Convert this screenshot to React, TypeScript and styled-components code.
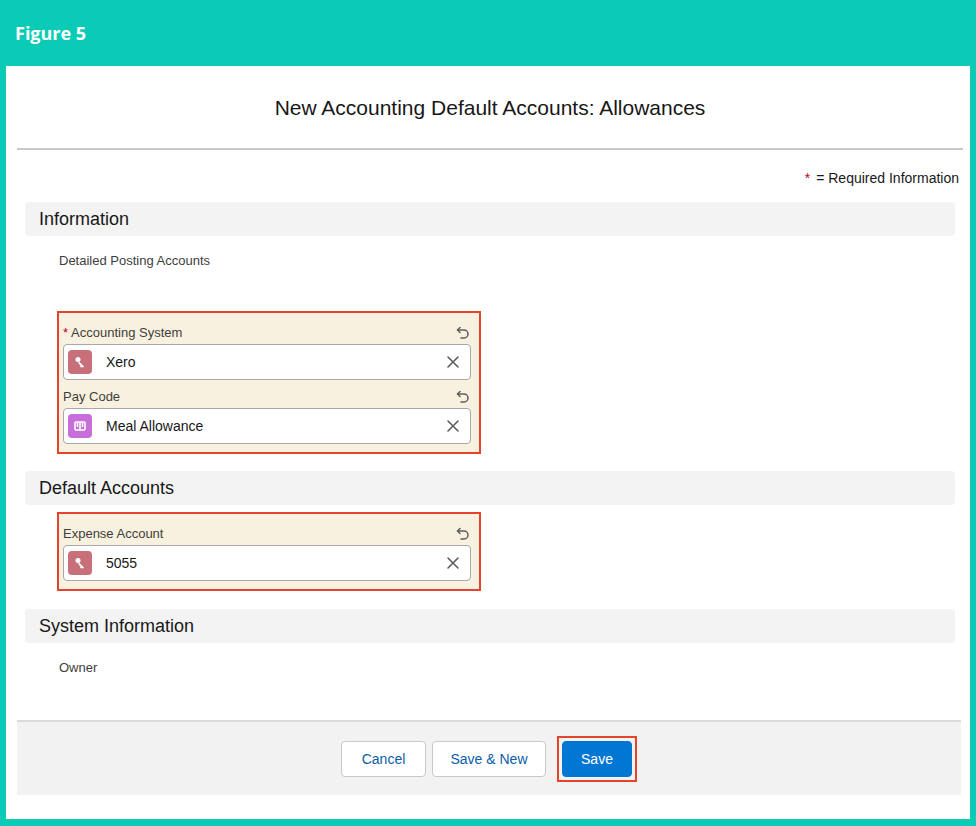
import React from "react";
import styled, { createGlobalStyle } from "styled-components";

const Global = createGlobalStyle`
  html, body { margin: 0; padding: 0; background: #fff; }
  body { font-family: "Helvetica Neue", Arial, "Liberation Sans", sans-serif; color: #181818; }
`;

const Frame = styled.div`
  width: 976px; height: 826px; box-sizing: border-box;
  border: 6px solid #0ccbb6; border-top: none; border-bottom-width: 7px;
  display: flex; flex-direction: column;
`;
const Banner = styled.div`
  height: 66px; background: #0ccbb6; margin: 0 -6px; padding: 0 15px;
  display: flex; align-items: center; color: #fff; font-weight: 700; font-size: 18px;
  font-family: "Open Sans", "Liberation Sans", sans-serif;
`;
const Body = styled.div`
  flex: 1; padding: 0 7px 0 11px; display: flex; flex-direction: column;
`;
const Title = styled.div`
  height: 80px; display: flex; align-items: center; justify-content: center;
  font-size: 21px; border-bottom: 2px solid #c9c9c9; padding-top: 2px;
`;
const Req = styled.div`
  text-align: right; font-size: 14px; padding: 20px 4px 0 0; height: 31px; box-sizing: border-box;
  span { color: #ba0517; margin-right: 6px; }
`;
const Section = styled.div`
  margin: 21px 8px 0 8px; height: 34px; background: #f3f3f3; border-radius: 4px;
  display: flex; align-items: center; padding-left: 14px; font-size: 18px;
`;
const Note = styled.div`
  font-size: 13px; color: #3e3e3c; padding: 17px 0 0 42px; height: 34px;
`;
const RedBox = styled.div<{ $mt: number }>`
  margin: ${p => p.$mt}px 0 0 40px; width: 424px; box-sizing: border-box;
  border: 2px solid #e5432b; background: #f9f1df; padding: 4px 8px 8px 4px;
`;
const LabelRow = styled.div`
  height: 23px; display: flex; align-items: center; justify-content: space-between;
  font-size: 13px; color: #3e3e3c; padding-top: 4px;
  b { color: #ba0517; font-weight: 400; margin-right: 3px; }
`;
const Input = styled.div<{ $mb?: number }>`
  height: 36px; box-sizing: border-box; border: 1px solid #a8a8a8; border-radius: 4px;
  background: #fff; display: flex; align-items: center; padding: 0 10px 0 4px;
  font-size: 14px; margin-bottom: ${p => p.$mb ?? 0}px;
`;
const Icon = styled.div<{ $c: string }>`
  width: 24px; height: 24px; border-radius: 4px; background: ${p => p.$c};
  display: flex; align-items: center; justify-content: center; margin-right: 14px;
`;
const Val = styled.div` flex: 1; `;
const Footer = styled.div`
  margin-top: auto; margin-bottom: 24px; height: 73px; background: #f3f2f2;
  border-top: 2px solid #dddbda; margin-right: 2px;
  display: flex; align-items: center; justify-content: center; gap: 6px;
`;
const Btn = styled.button<{ $w: number }>`
  width: ${p => p.$w}px; height: 36px; border: 1px solid #c9c9c9; border-radius: 4px;
  background: #fff; color: #0b5cab; font-size: 14px; font-family: inherit;
`;
const SaveWrap = styled.div`
  border: 2px solid #e5432b; padding: 3px; margin-left: 5px;
`;
const Primary = styled(Btn)` background: #0176d3; border-color: #0176d3; color: #fff; `;

const Undo = () => (
  <svg width="16" height="16" viewBox="0 0 16 16" fill="none" stroke="#5c5c5c" strokeWidth="1.5" strokeLinecap="round">
    <path d="M5 2.5 2.5 5 5 7.5" />
    <path d="M2.8 5H9a4 4 0 0 1 0 8H6" />
  </svg>
);
const Close = () => (
  <svg width="14" height="14" viewBox="0 0 14 14" stroke="#5c5c5c" strokeWidth="1.6" strokeLinecap="round">
    <path d="M2 2l10 10M12 2 2 12" />
  </svg>
);
const Key = () => (
  <svg width="14" height="14" viewBox="0 0 14 14" fill="#fff">
    <circle cx="5" cy="4.5" r="2.5" />
    <path d="M6 6.5l5 5-1.3 1.2-1-1-0.8.8-1-1 .8-.8-2.4-2.4z" />
  </svg>
);
const Book = () => (
  <svg width="14" height="14" viewBox="0 0 14 14" fill="none" stroke="#fff" strokeWidth="1.6">
    <rect x="2" y="3" width="10" height="8" rx="1" />
    <path d="M7 3v8M4.5 3v5M9.5 3v5" />
  </svg>
);

const Field = ({ label, req, value, icon, color, mb }: any) => (
  <>
    <LabelRow>
      <span>{req && <b>*</b>}{label}</span>
      <Undo />
    </LabelRow>
    <Input $mb={mb}>
      <Icon $c={color}>{icon}</Icon>
      <Val>{value}</Val>
      <Close />
    </Input>
  </>
);

export default function App() {
  return (
    <Frame>
      <Global />
      <Banner>Figure 5</Banner>
      <Body>
        <Title>New Accounting Default Accounts: Allowances</Title>
        <Req><span>*</span>= Required Information</Req>
        <Section>Information</Section>
        <Note>Detailed Posting Accounts</Note>
        <RedBox $mt={24}>
          <Field label="Accounting System" req value="Xero" icon={<Key />} color="#c8707a" mb={1} />
          <Field label="Pay Code" value="Meal Allowance" icon={<Book />} color="#c86edb" />
        </RedBox>
        <Section style={{ marginTop: 17 }}>Default Accounts</Section>
        <RedBox $mt={7}>
          <Field label="Expense Account" value="5055" icon={<Key />} color="#c8707a" />
        </RedBox>
        <Section style={{ marginTop: 18 }}>System Information</Section>
        <Note>Owner</Note>
        <Footer>
          <Btn $w={85}>Cancel</Btn>
          <Btn $w={114}>Save &amp; New</Btn>
          <SaveWrap><Primary $w={70}>Save</Primary></SaveWrap>
        </Footer>
      </Body>
    </Frame>
  );
}
